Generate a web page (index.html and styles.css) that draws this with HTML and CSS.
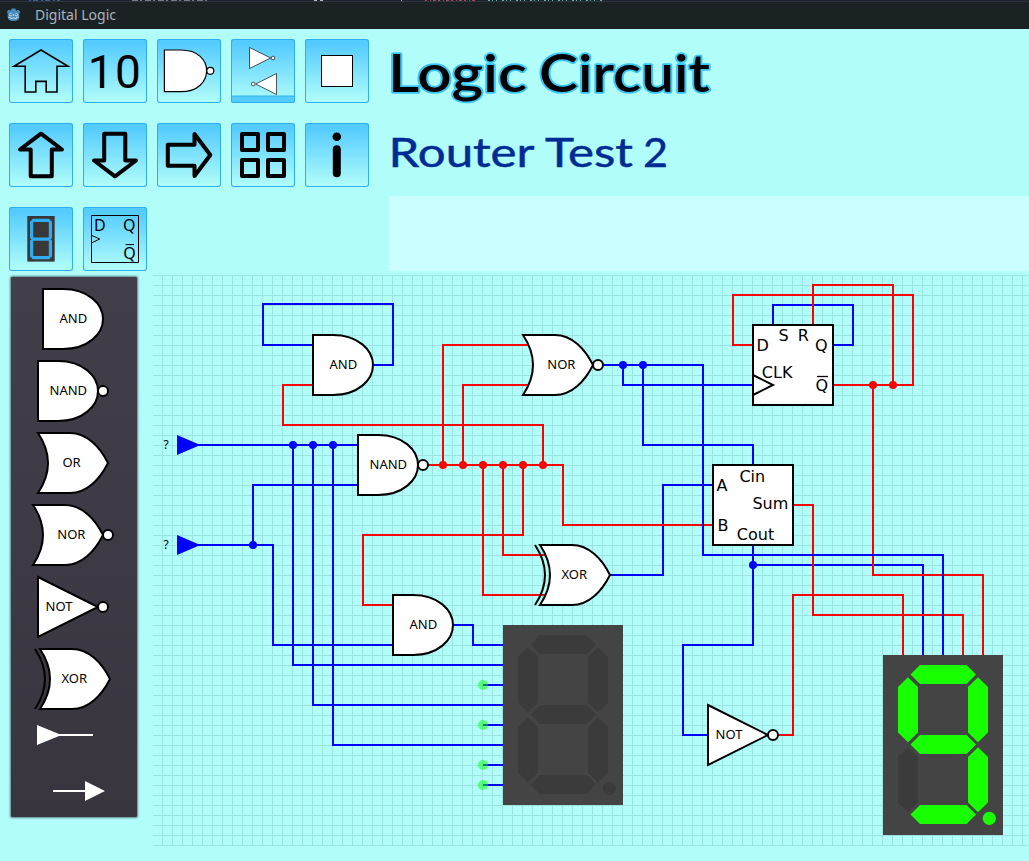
FILE: index.html
```html
<!DOCTYPE html>
<html lang="en">
<head>
<meta charset="utf-8">
<title>Digital Logic</title>
<link rel="stylesheet" href="styles.css">
</head>
<body>
<svg class="defs" width="0" height="0" aria-hidden="true">
  <defs>
    <g id="and"><path class="body" d="M0 0H20C45 0 60 15 60 30S45 60 20 60H0Z"/><text class="gate" x="30.3" y="34">AND</text></g>
    <g id="nand"><path class="body" d="M0 0H20C45 0 60 15 60 30S45 60 20 60H0Z"/><circle class="body" cx="65" cy="30" r="5"/><text class="gate" x="30.3" y="34">NAND</text></g>
    <g id="or"><path class="body" d="M0 0H32C49 0 62 14 70 30C62 46 49 60 32 60H0Q20 30 0 0Z"/><text class="gate" x="33.5" y="34">OR</text></g>
    <g id="nor"><path class="body" d="M0 0H32C49 0 62 14 70 30C62 46 49 60 32 60H0Q20 30 0 0Z"/><circle class="body" cx="75" cy="30" r="5"/><text class="gate" x="38.4" y="34">NOR</text></g>
    <g id="xor"><path class="body" d="M0 0H32C49 0 62 14 70 30C62 46 49 60 32 60H0Q20 30 0 0Z"/><path class="arc" d="M-5 0Q15 30-5 60"/><text class="gate" x="34.2" y="34">XOR</text></g>
    <g id="not"><path class="body" d="M0 0L60 30L0 60Z"/><circle class="body" cx="65" cy="30" r="5"/><text class="gate" x="21" y="34">NOT</text></g>
    <polygon id="hseg" points="27.5,19.5 37,10 83.5,10 93,19.5 83.5,29 37,29"/>
    <polygon id="vseg" points="25,22.3 35,32 35,77.5 25,87.3 15,77.5 15,32"/>
    <path id="arrow" d="M32 10.7L11 26.5H21.7V53.2H42.8V26.5H53Z"/>
    <pattern id="grid" x="162" y="275" width="10" height="10" patternUnits="userSpaceOnUse"><path d="M0 0H10V1H1V10H0Z" fill="#9be4e0"/></pattern>
  </defs>
</svg>

<header class="titlebar">
  <svg class="strip" viewBox="0 0 1029 1" shape-rendering="crispEdges">
    <path d="M29 .5H60" stroke="#38609c" stroke-dasharray="2 2 5 3"/>
    <path d="M132 .5H210" stroke="#777c85" stroke-dasharray="6 2 2 3"/>
    <path d="M314 .5H323" stroke="#b8bcc4" stroke-dasharray="3 3"/>
    <path d="M401 .5H402" stroke="#9aa"/>
    <path d="M425 .5H475" stroke="#a84b59" stroke-dasharray="2 3 1 2 3 2"/>
    <path d="M488 .5H604" stroke="#62b79c" stroke-dasharray="2 2 1 3 1 5"/>
  </svg>
  <div class="caption">
    <svg class="logo" viewBox="0 0 16 16">
      <path d="M.8 4.5L3 2.3L5 3.4L6.2 1H9.8L11 3.4L13 2.3L15.2 4.5L14.2 6.3V10.5Q14 14.5 8 14.5T1.8 10.5V6.3Z" fill="#478cbf"/>
      <circle cx="5" cy="7.7" r="1.6" fill="#dce8ee"/><circle cx="11" cy="7.7" r="1.6" fill="#dce8ee"/>
      <circle cx="5.2" cy="7.7" r=".8" fill="#414042"/><circle cx="10.8" cy="7.7" r=".8" fill="#414042"/>
      <path d="M8 7V9M2.5 10.4H5V11.8H7V11H9V11.8H11V10.4H13.5" fill="none" stroke="#dce8ee" stroke-width=".8"/>
    </svg>
    <span class="appname">Digital Logic</span>
  </div>
</header>

<section class="top">
  <nav class="tools">
    <button class="tool"><svg viewBox="0 0 64 64"><path class="ink" stroke-width="1.6" d="M32 11L5 27.2H16.2V53H26.8V42.4H37.2V53H48V27.2H59Z"/></svg></button>
    <button class="tool"><svg viewBox="0 0 64 64"><text class="digits" x="4.7 32" y="48.6">10</text></svg></button>
    <button class="tool"><svg viewBox="0 0 64 64"><path class="shape" d="M7.4 11H24C41 11 49.6 21 49.6 31.7S41 52.7 24 52.7H7.4Z"/><circle class="shape" cx="53.3" cy="31.8" r="3.5"/></svg></button>
    <button class="tool"><svg viewBox="0 0 64 64"><path class="thin" d="M18.5 8.5V29.5L39.7 19ZM45.5 34.5V55.5L24.7 45Z"/><circle class="thin" cx="42" cy="19" r="1.8"/><circle class="thin" cx="22.2" cy="45" r="1.8"/><rect class="bar" x=".5" y="57" width="63" height="6.5" rx="1.5"/></svg></button>
    <button class="tool"><svg viewBox="0 0 64 64"><rect class="shape one" x="16.5" y="16.5" width="31" height="31"/></svg></button>
    <button class="tool"><svg viewBox="0 0 64 64"><use href="#arrow" class="ink bold"/></svg></button>
    <button class="tool"><svg viewBox="0 0 64 64"><use href="#arrow" class="ink bold" transform="rotate(180 32 32)"/></svg></button>
    <button class="tool"><svg viewBox="0 0 64 64"><use href="#arrow" class="ink bold" transform="rotate(90 32 32)"/></svg></button>
    <button class="tool"><svg viewBox="0 0 64 64"><path class="ink bold" d="M11 11H27V27H11ZM37 11H53V27H37ZM11 37H27V53H11ZM37 37H53V53H37Z"/></svg></button>
    <button class="tool"><svg viewBox="0 0 64 64"><circle cx="31.8" cy="13.7" r="4.3"/><rect x="27.8" y="22.3" width="8" height="32" rx="4"/></svg></button>
    <button class="tool"><svg viewBox="0 0 64 64"><rect x="18.3" y="9" width="27.4" height="45.6" fill="#383838"/><path d="M24.3 13.3H39.7M24.3 32.2H39.7M24.3 50.7H39.7M22.6 15V30.6M22.6 34V49M41.4 15V30.6M41.4 34V49" stroke="#2fadf0" stroke-width="3.2" stroke-linecap="round"/></svg></button>
    <button class="tool"><svg viewBox="0 0 64 64"><path class="ink" stroke-width="1" d="M8.5 8.5H55.5V55.5H8.5ZM8.5 28.3L16.7 32L8.5 36M42.5 37.6H51"/><text class="mini" x="11" y="23.7">D</text><text class="mini" x="40" y="23.7">Q</text><text class="mini" x="40.3" y="51.7">Q</text></svg></button>
  </nav>
  <div class="info">
    <svg class="headings" viewBox="389 29 640 167">
      <text class="h1" y="92"><tspan x="388" textLength="139" lengthAdjust="spacingAndGlyphs">Logic</tspan> <tspan x="539" textLength="171" lengthAdjust="spacingAndGlyphs">Circuit</tspan></text>
      <text class="h2" y="167"><tspan x="388.5" textLength="145" lengthAdjust="spacingAndGlyphs">Router</tspan> <tspan x="545" textLength="88" lengthAdjust="spacingAndGlyphs">Test</tspan> <tspan x="643" textLength="25" lengthAdjust="spacingAndGlyphs">2</tspan></text>
    </svg>
    <div class="notes"></div>
  </div>
</section>

<main class="work">
  <aside class="palette">
    <svg class="part" viewBox="11 0 126 60"><use href="#and" x="43"/></svg>
    <svg class="part" viewBox="11 0 126 60"><use href="#nand" x="38"/></svg>
    <svg class="part" viewBox="11 0 126 60"><use href="#or" x="38"/></svg>
    <svg class="part" viewBox="11 0 126 60"><use href="#nor" x="33"/></svg>
    <svg class="part" viewBox="11 0 126 60"><use href="#not" x="38"/></svg>
    <svg class="part" viewBox="11 0 126 60"><use href="#xor" x="40"/></svg>
    <svg class="part pin" viewBox="11 0 126 28"><path d="M37 4L59 13H93V15H59L37 24Z" fill="#fff"/></svg>
    <svg class="part pin last" viewBox="11 0 126 28"><path d="M53 13H85V4L105 14L85 24V15H53Z" fill="#fff"/></svg>
  </aside>

  <svg class="board" viewBox="153 275 876 571">
    <rect x="153" y="275" width="876" height="571" fill="url(#grid)"/>
    <g class="wire low">
      <path d="M313 345H263V304H393V365H373M195 445H358M293 445V665H503M313 445V705H503M333 445V745H503M358 485H253V545M195 545H273V645H393M453 625H473V645H503"/>
      <path d="M623 365V385H753M643 365V445H753V465M610 575H663V485H713M773 325V305H853V345H833M753 545V645H683V735H708M753 565H923V655"/>
      <path d="M483 685H503M483 725H503M483 765H503M483 785H503"/>
    </g>
    <g class="wire high">
      <path d="M313 385H283V425H543V465M428 465H563V525H713M443 465V345H530M463 465V385H530M483 465V595H546M503 465V555H546M523 465V535H363V605H393"/>
      <path d="M753 345H733V295H913V385H833M813 325V285H893V385M873 385V575H983V655M793 505H813V615H963V655M778 735H793V595H903V655"/>
    </g>
    <path class="wire low" d="M603 365H703V555H943V655"/>
    <g class="low-dot">
      <circle cx="293" cy="445" r="4"/><circle cx="313" cy="445" r="4"/><circle cx="333" cy="445" r="4"/><circle cx="253" cy="545" r="4"/>
      <circle cx="623" cy="365" r="4"/><circle cx="643" cy="365" r="4"/><circle cx="753" cy="565" r="4"/>
      <path d="M177 435L198 444V446L177 455ZM177 535L198 544V546L177 555Z"/>
    </g>
    <g class="high-dot">
      <circle cx="443" cy="465" r="4"/><circle cx="463" cy="465" r="4"/><circle cx="483" cy="465" r="4"/><circle cx="503" cy="465" r="4"/><circle cx="523" cy="465" r="4"/><circle cx="543" cy="465" r="4"/>
      <circle cx="873" cy="385" r="4"/><circle cx="893" cy="385" r="4"/>
    </g>
    <g class="open-pin">
      <circle cx="483" cy="685" r="5"/><circle cx="483" cy="725" r="5"/><circle cx="483" cy="765" r="5"/><circle cx="483" cy="785" r="5"/>
    </g>
    <text class="unknown" x="163.5" y="449">?</text>
    <text class="unknown" x="163.5" y="549">?</text>

    <use href="#and" x="313" y="335"/>
    <use href="#nand" x="358" y="435"/>
    <use href="#and" x="393" y="595"/>
    <use href="#nor" x="523" y="335"/>
    <use href="#xor" x="540" y="545"/>
    <use href="#not" x="708" y="705"/>

    <g class="chip">
      <rect class="body" x="753" y="325" width="80" height="80"/>
      <path class="arc" d="M753 375L773 385L753 395"/>
      <path class="arc" stroke-width="1.3" d="M817 376.5H828"/>
      <text x="756.6" y="350.6">D</text><text x="778.4" y="341">S</text><text x="797.7" y="341">R</text><text x="815" y="350.6">Q</text>
      <text x="761.8" y="378.3">CLK</text><text x="815.4" y="390.5">Q</text>
    </g>
    <g class="chip">
      <rect class="body" x="713" y="465" width="80" height="80"/>
      <text x="739.4" y="481.8">Cin</text><text x="716.6" y="490.8">A</text><text x="717.4" y="531.4">B</text>
      <text x="752.4" y="509.4">Sum</text><text x="736.8" y="540.4">Cout</text>
    </g>

    <g class="seg-off" transform="translate(503 625)">
      <rect class="case" width="120" height="180"/>
      <use href="#hseg"/><use href="#hseg" y="70"/><use href="#hseg" y="140"/>
      <use href="#vseg"/><use href="#vseg" x="70"/><use href="#vseg" y="70"/><use href="#vseg" x="70" y="70"/>
      <circle cx="106.3" cy="163.4" r="6.6"/>
    </g>
    <g class="seg-on" transform="translate(883 655)">
      <rect class="case" width="120" height="180"/>
      <use href="#hseg"/><use href="#hseg" y="70"/><use href="#hseg" y="140"/>
      <use href="#vseg"/><use href="#vseg" x="70"/><use class="seg-off" href="#vseg" y="70"/><use href="#vseg" x="70" y="70"/>
      <circle cx="106.3" cy="163.4" r="6.6"/>
    </g>
  </svg>
</main>
</body>
</html>
```

FILE: styles.css
```css
* { box-sizing: border-box; }
body {
  margin: 0;
  height: 861px;
  overflow: hidden;
  background: #b0fdf9;
  font-family: "Noto Sans", sans-serif;
}
svg { display: block; }
.defs { position: absolute; }

.titlebar { height: 29px; background: #1b2224; }
.strip { width: 1029px; height: 1px; background: #1d222e; }
.caption {
  height: 28px;
  display: flex;
  align-items: center;
  gap: 14px;
  padding: 0 0 2px 6px;
  border-top: 1px solid #30343f;
}
.logo { width: 15px; height: 16px; }
.appname { font-size: 14px; line-height: 20px; color: #a9b3bf; }

.top { display: flex; height: 246px; }
.tools {
  width: 389px;
  padding: 10px 20px 0 9px;
  display: grid;
  grid-template-columns: repeat(5, 64px);
  grid-auto-rows: 64px;
  gap: 20px 10px;
}
.tool {
  padding: 0;
  border: 0;
  border-radius: 3px;
  background: linear-gradient(#55ccff 8%, #b0fdf9 98%);
  box-shadow: inset 0 0 0 1px #2eaef2;
}
.tool svg { width: 64px; height: 64px; }
.ink { fill: none; stroke: #000; }
.bold { stroke-width: 4; stroke-linejoin: round; }
.shape { fill: #fff; stroke: #000; stroke-width: 1.2; }
.one { stroke-width: 1; }
.thin { fill: #fff; stroke: #111; stroke-width: .7; }
.bar { fill: #55ccff; stroke: #2eaef2; }
.digits { font: 46px Roboto, sans-serif; }
.mini { font: 16px "Noto Sans", sans-serif; }

.info { flex: 1; }
.headings { width: 640px; height: 167px; overflow: visible; }
.h1 {
  font: 600 51.5px Lato, sans-serif;
  stroke: #38c6f8;
  stroke-width: 3.5px;
  stroke-linejoin: round;
  paint-order: stroke;
}
.h2 { font: 400 41.5px Lato, sans-serif; fill: #002b94; stroke: #002b94; stroke-width: .5px; }
.notes { height: 75px; background: #ccffff; }

.work { display: flex; align-items: flex-start; gap: 16px; padding-left: 11px; }
.palette {
  width: 126px;
  height: 540px;
  margin-top: 2px;
  padding-top: 12px;
  display: flex;
  flex-direction: column;
  gap: 12px;
  background: linear-gradient(#433f4a, #38353f);
  box-shadow: 0 0 2px 1px rgba(40, 50, 60, .6);
  border-radius: 1px;
}
.part { width: 126px; height: 60px; overflow: visible; flex: none; }
.pin { height: 28px; }
.last { margin-top: 16px; }

.board { width: 876px; height: 571px; flex: none; }
.body { fill: #fff; stroke: #000; stroke-width: 2; }
.arc { fill: none; stroke: #000; }
.arc:not([stroke-width]) { stroke-width: 2; }
.gate { font: 13px "Noto Sans", sans-serif; text-anchor: middle; }
.unknown { font: 12px "Noto Sans", sans-serif; }
.chip text { font: 16px "DejaVu Sans", sans-serif; }
.wire { fill: none; stroke-width: 2; }
.low { stroke: #0000ff; }
.high { stroke: #ff0000; }
.low-dot { fill: #0000ff; }
.high-dot { fill: #ff0000; }
.open-pin { fill: rgba(0, 255, 0, .5); }
.seg-off { fill: #3b3b3b; }
.seg-on { fill: #18ff00; }
.seg-on .seg-off { fill: #3b3b3b; }
.case { fill: #444; }
```
